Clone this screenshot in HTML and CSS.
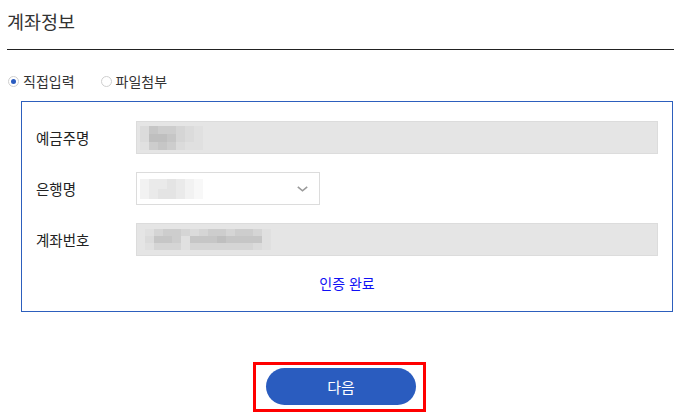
FILE: index.html
```html
<!DOCTYPE html>
<html lang="ko">
<head>
<meta charset="utf-8">
<title>계좌정보</title>
<link rel="stylesheet" href="styles.css">
</head>
<body>
<div class="page">
  <h2 class="title">계좌정보</h2>
  <div class="rule"></div>

  <div class="radios">
    <label class="radio">
      <span class="dot checked"></span>
      <span class="radio-text">직접입력</span>
    </label>
    <label class="radio">
      <span class="dot"></span>
      <span class="radio-text">파일첨부</span>
    </label>
  </div>

  <div class="box">
    <div class="row">
      <div class="label">예금주명</div>
      <div class="field field-ro">
        <div class="mosaic m7">
          <i class="c5"></i><i class="c2"></i><i class="c3"></i><i class="c3"></i><i class="c4"></i><i class="c5"></i><i class="c6"></i>
          <i class="c5"></i><i class="c1"></i><i class="c1"></i><i class="c2"></i><i class="c4"></i><i class="c5"></i><i class="c6"></i>
          <i class="c6"></i><i class="c3"></i><i class="c2"></i><i class="c3"></i><i class="c5"></i><i class="c6"></i><i class="c6"></i>
        </div>
      </div>
    </div>

    <div class="row">
      <div class="label">은행명</div>
      <div class="field field-select">
        <div class="mosaic m7 light">
          <i class="w3"></i><i class="w2"></i><i class="w2"></i><i class="w1"></i><i class="w2"></i><i class="w3"></i><i class="w4"></i>
          <i class="w3"></i><i class="w2"></i><i class="w1"></i><i class="w1"></i><i class="w2"></i><i class="w3"></i><i class="w4"></i>
        </div>
        <svg class="chev" width="11" height="6" viewBox="0 0 11 6" aria-hidden="true">
          <path d="M0.8 0.8 L5.5 4.8 L10.2 0.8" fill="none" stroke="#9a9a9a" stroke-width="1.6"/>
        </svg>
      </div>
    </div>

    <div class="row">
      <div class="label">계좌번호</div>
      <div class="field field-ro">
        <div class="mosaic m14">
          <i class="c6"></i><i class="c4"></i><i class="c3"></i><i class="c3"></i><i class="c4"></i><i class="c5"></i><i class="c4"></i><i class="c3"></i><i class="c3"></i><i class="c4"></i><i class="c3"></i><i class="c3"></i><i class="c4"></i><i class="c6"></i>
          <i class="c5"></i><i class="c2"></i><i class="c2"></i><i class="c3"></i><i class="c6"></i><i class="c2"></i><i class="c2"></i><i class="c2"></i><i class="c1"></i><i class="c2"></i><i class="c2"></i><i class="c2"></i><i class="c2"></i><i class="c6"></i>
          <i class="c6"></i><i class="c4"></i><i class="c4"></i><i class="c4"></i><i class="c6"></i><i class="c4"></i><i class="c4"></i><i class="c4"></i><i class="c4"></i><i class="c4"></i><i class="c4"></i><i class="c4"></i><i class="c5"></i><i class="c6"></i>
        </div>
      </div>
    </div>

    <div class="verify"><a href="#" class="verify-link">인증 완료</a></div>
  </div>

  <div class="actions">
    <div class="focus">
      <button type="button" class="btn">다음</button>
    </div>
  </div>
</div>
</body>
</html>
```

FILE: styles.css
```css
* { box-sizing: border-box; }

html, body {
  margin: 0;
  padding: 0;
  background: #ffffff;
}

body {
  font-family: "Noto Sans CJK KR", "Noto Sans", sans-serif;
  color: #222;
}

.page {
  width: 683px;
  padding: 0 9px 0 7px;
}

.title {
  margin: 0;
  padding: 0;
  height: 49px;
  line-height: 42px;
  font-size: 18.5px;
  font-weight: 400;
  color: #333;
}

.rule {
  height: 1px;
  background: #222;
}

.radios {
  display: flex;
  align-items: center;
  height: 20px;
  margin-top: 21px;
  padding-left: 1px;
}

.radio {
  display: flex;
  align-items: center;
  gap: 4px;
  font-size: 14px;
  color: #333;
}

.radio + .radio {
  margin-left: 26px;
}

.dot {
  width: 11px;
  height: 11px;
  border: 1px solid #cfcfcf;
  border-radius: 50%;
  background: #fff;
  display: inline-flex;
  align-items: center;
  justify-content: center;
}

.dot.checked::after {
  content: "";
  width: 5px;
  height: 5px;
  border-radius: 50%;
  background: #2b5cc0;
}

.box {
  width: 652px;
  margin: 10px 0 0 14px;
  border: 1px solid #2d5fbd;
  padding: 19px 14px 18px 14px;
  display: flex;
  flex-direction: column;
  gap: 18px;
}

.row {
  display: flex;
  align-items: center;
}

.label {
  width: 100px;
  flex: none;
  font-size: 14.5px;
  color: #222;
}

.field {
  height: 33px;
  border: 1px solid #dcdcdc;
  display: flex;
  align-items: center;
  padding-left: 3px;
}

.field-ro {
  flex: 1;
  background: #e5e5e5;
}

.field-select {
  width: 184px;
  background: #fff;
  justify-content: space-between;
  padding-right: 11px;
}

.mosaic {
  display: grid;
  grid-auto-rows: 8px;
}

.m7 { grid-template-columns: repeat(7, 9px); }
.m14 { grid-template-columns: repeat(14, 9px); margin-left: 5px; grid-auto-rows: 7px; }
.mosaic.light { grid-auto-rows: 10px; }

.mosaic i { display: block; }

.c1 { background: #bfbfbf; }
.c2 { background: #c6c6c6; }
.c3 { background: #cdcdcd; }
.c4 { background: #d5d5d5; }
.c5 { background: #dbdbdb; }
.c6 { background: #e0e0e0; }

.w1 { background: #e4e4e4; }
.w2 { background: #eaeaea; }
.w3 { background: #f2f2f2; }
.w4 { background: #f8f8f8; }

.chev { display: block; }

.verify {
  display: flex;
  justify-content: center;
  height: 20px;
  align-items: center;
  margin-top: -1px;
}

.verify-link {
  font-size: 14px;
  color: #1010f5;
  text-decoration: none;
}

.actions {
  display: flex;
  justify-content: center;
  margin-top: 50px;
  padding-right: 2px;
}

.focus {
  border: 3px solid #ff0000;
  padding: 3px 7px 3px 10px;
  width: 173px;
  height: 50px;
}

.btn {
  display: block;
  width: 150px;
  height: 37px;
  border: 0;
  border-radius: 19px;
  background: #2a5cbf;
  color: #fff;
  font-family: "Noto Sans CJK KR", "Noto Sans", sans-serif;
  font-size: 15px;
  padding: 0;
  cursor: pointer;
}
```
